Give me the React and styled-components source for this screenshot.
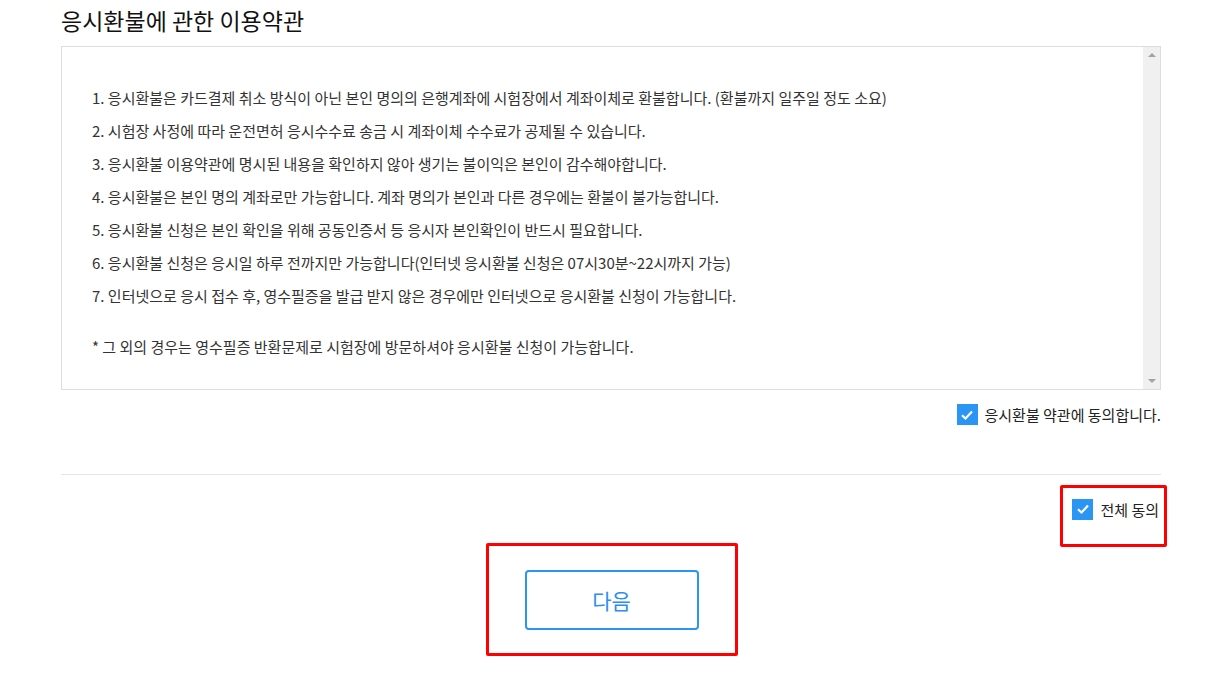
import React from 'react';
import styled, { createGlobalStyle } from 'styled-components';

const GlobalStyle = createGlobalStyle`
  body {
    margin: 0;
    background: #fff;
    font-family: 'Noto Sans CJK KR', 'Noto Sans', sans-serif;
    color: #333;
  }
`;

const Page = styled.div`
  width: 1100px;
  padding: 4px 0 0 61px;
`;

const Title = styled.h2`
  margin: 0;
  font-size: 23px;
  font-weight: 400;
  color: #111;
  line-height: 32px;
  height: 42px;
`;

const TermsBox = styled.div`
  display: flex;
  height: 342px;
  border: 1px solid #ddd;
`;

const TermsBody = styled.div`
  flex: 1;
  padding: 34px 0 0 30px;
  font-size: 15px;
  color: #333;
`;

const Line = styled.p`
  margin: 0;
  line-height: 33px;
  margin-top: ${({ gap }) => (gap ? '18px' : '0')};
`;

const Scrollbar = styled.div`
  width: 17px;
  background: #f0f0f0;
  display: flex;
  flex-direction: column;
  justify-content: space-between;
  align-items: center;
  padding: 6px 0;
`;

const Arrow = styled.span`
  width: 0;
  height: 0;
  border-left: 4px solid transparent;
  border-right: 4px solid transparent;
  ${({ down }) =>
    down ? 'border-top: 4px solid #a3a3a3;' : 'border-bottom: 4px solid #a3a3a3;'}
`;

const AgreeRow = styled.div`
  display: flex;
  justify-content: flex-end;
  padding-top: ${({ top }) => top};
`;

const CheckLabel = styled.label`
  display: flex;
  align-items: center;
  gap: 7px;
  font-size: 15px;
  color: #222;
  cursor: pointer;
`;

const CheckSquare = styled.span`
  width: 21px;
  height: 21px;
  background: #2b95f4;
  display: flex;
  align-items: center;
  justify-content: center;
`;

const Divider = styled.hr`
  margin: 49px 0 0;
  border: 0;
  border-top: 1px solid #e6e6e6;
`;

const Highlight = styled.div`
  border: 3px solid #f00;
  border-radius: 2px;
  display: flex;
  align-items: center;
  justify-content: center;
  box-sizing: border-box;
`;

const AllAgreeBox = styled(Highlight)`
  width: 107px;
  height: 62px;
  margin-right: -6px;
  justify-content: flex-end;
  padding-right: 5px;
  padding-bottom: 14px;
`;

const ButtonRow = styled.div`
  display: flex;
  justify-content: center;
  margin-top: -4px;
`;

const ButtonBox = styled(Highlight)`
  width: 252px;
  height: 113px;
  margin-left: 1px;
`;

const NextButton = styled.button`
  width: 174px;
  height: 60px;
  border: 2px solid #2b95f4;
  border-radius: 4px;
  background: #fff;
  color: #2b8ef0;
  font-family: inherit;
  font-size: 21px;
  margin-left: 0;
  cursor: pointer;
`;

const Check = () => (
  <CheckSquare>
    <svg width="14" height="14" viewBox="0 0 14 14">
      <path d="M2 7.2 L5.5 10.5 L12 3.6" fill="none" stroke="#fff" strokeWidth="2.2" />
    </svg>
  </CheckSquare>
);

const terms = [
  '1. 응시환불은 카드결제 취소 방식이 아닌 본인 명의의 은행계좌에 시험장에서 계좌이체로 환불합니다. (환불까지 일주일 정도 소요)',
  '2. 시험장 사정에 따라 운전면허 응시수수료 송금 시 계좌이체 수수료가 공제될 수 있습니다.',
  '3. 응시환불 이용약관에 명시된 내용을 확인하지 않아 생기는 불이익은 본인이 감수해야합니다.',
  '4. 응시환불은 본인 명의 계좌로만 가능합니다. 계좌 명의가 본인과 다른 경우에는 환불이 불가능합니다.',
  '5. 응시환불 신청은 본인 확인을 위해 공동인증서 등 응시자 본인확인이 반드시 필요합니다.',
  '6. 응시환불 신청은 응시일 하루 전까지만 가능합니다(인터넷 응시환불 신청은 07시30분~22시까지 가능)',
  '7. 인터넷으로 응시 접수 후, 영수필증을 발급 받지 않은 경우에만 인터넷으로 응시환불 신청이 가능합니다.',
];

const App = () => (
  <>
    <GlobalStyle />
    <Page>
      <Title>응시환불에 관한 이용약관</Title>
      <TermsBox>
        <TermsBody>
          {terms.map(t => (
            <Line key={t}>{t}</Line>
          ))}
          <Line gap>* 그 외의 경우는 영수필증 반환문제로 시험장에 방문하셔야 응시환불 신청이 가능합니다.</Line>
        </TermsBody>
        <Scrollbar>
          <Arrow />
          <Arrow down />
        </Scrollbar>
      </TermsBox>
      <AgreeRow top="14px">
        <CheckLabel>
          <Check />
          응시환불 약관에 동의합니다.
        </CheckLabel>
      </AgreeRow>
      <Divider />
      <AgreeRow top="10px">
        <AllAgreeBox>
          <CheckLabel>
            <Check />
            전체 동의
          </CheckLabel>
        </AllAgreeBox>
      </AgreeRow>
      <ButtonRow>
        <ButtonBox>
          <NextButton>다음</NextButton>
        </ButtonBox>
      </ButtonRow>
    </Page>
  </>
);

export default App;
